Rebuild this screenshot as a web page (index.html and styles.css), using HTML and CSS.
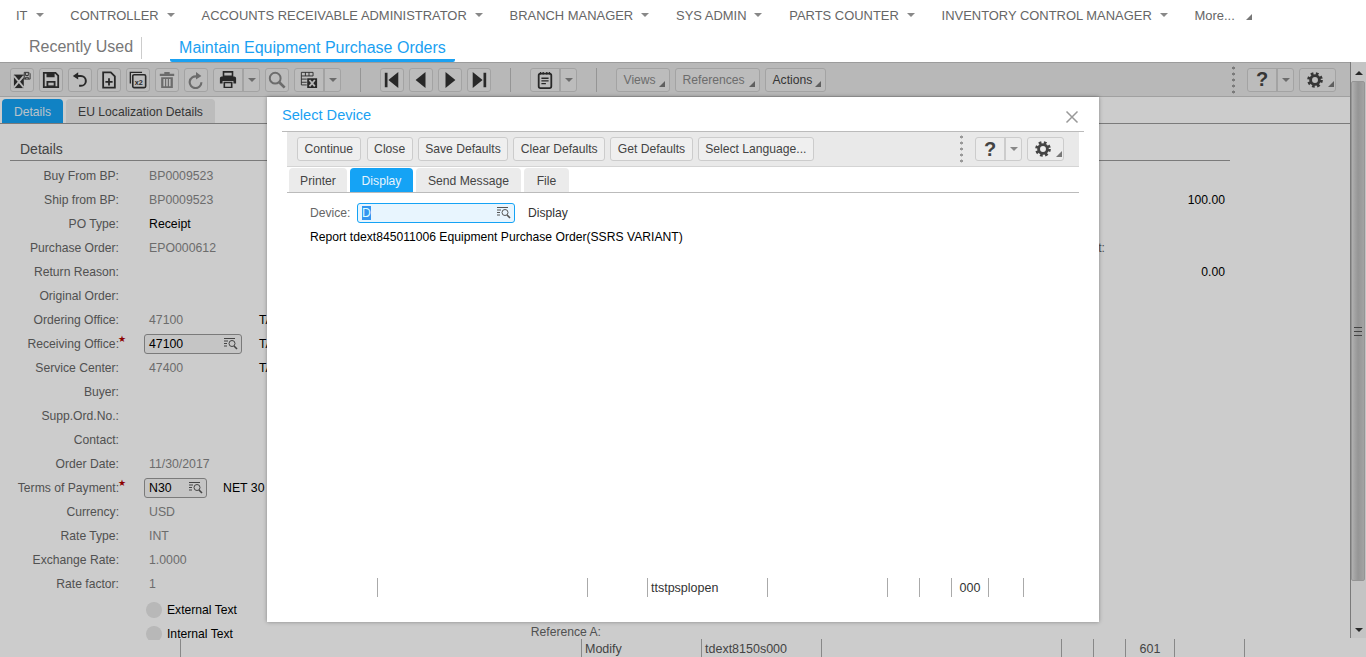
FILE: index.html
```html
<!DOCTYPE html>
<html lang="en">
<head>
  <meta charset="UTF-8">
  <meta name="viewport" content="width=device-width, initial-scale=1.0">
  <title>Maintain Equipment Purchase Orders</title>
  <link rel="stylesheet" href="styles.css">
</head>
<body>
  <!-- icon sprite -->
  <svg class="sprite" xmlns="http://www.w3.org/2000/svg">
    <symbol id="i-saveclose" viewBox="0 0 20 20">
      <path d="M1 4h11v15H1z" fill="currentColor"/>
      <path d="M1 5.500l11 13M12 5.500L1 18.500" stroke="#e6e6e6" stroke-width="2" fill="none"/>
      <path d="M12.500 1.500h5l1.500 1.500v6h-6.500z" fill="#e6e6e6" stroke="currentColor"/>
      <path d="M14 2v3h3V2M14 9V7h3v2" fill="none" stroke="currentColor"/>
    </symbol>
    <symbol id="i-save" viewBox="0 0 20 20">
      <path d="M2 2h13l3 3v13H2z" fill="none" stroke="currentColor" stroke-width="2"/>
      <path d="M5 2h9v5H5zM5 11h10v7H5z" fill="currentColor"/>
      <path d="M7 13h6v3H7z" fill="#e6e6e6"/>
    </symbol>
    <symbol id="i-undo" viewBox="0 0 20 20">
      <path d="M7 5.500h4a5.500 5.500 0 0 1 0 11H9" fill="none" stroke="currentColor" stroke-width="2.200"/>
      <path d="M8 1.500v8l-6-4z" fill="currentColor"/>
    </symbol>
    <symbol id="i-docplus" viewBox="0 0 20 20">
      <path d="M3.500 1.500h8.500l4.500 4.500v12.500h-13z" fill="none" stroke="currentColor" stroke-width="2"/>
      <path d="M9 8h2v3h3v2h-3v3H9v-3H6v-2h3z" fill="currentColor"/>
    </symbol>
    <symbol id="i-copy" viewBox="0 0 20 20">
      <path d="M1.500 14V1.500h13" fill="none" stroke="currentColor" stroke-width="1.500"/>
      <rect x="4.200" y="4.200" width="14.300" height="14.300" rx="1.500" fill="none" stroke="currentColor" stroke-width="1.800"/>
      <text x="6.500" y="15.500" font-family="Liberation Sans, sans-serif" font-size="8" font-weight="700" fill="currentColor">x2</text>
    </symbol>
    <symbol id="i-trash" viewBox="0 0 20 20">
      <path d="M7 1h6v2h5v2.500H2V3h5z" fill="currentColor"/>
      <path d="M3.500 7h13v12h-13zM6 9v8h1.800V9zM9.100 9v8h1.800V9zM12.200 9v8H14V9z" fill="currentColor" fill-rule="evenodd"/>
    </symbol>
    <symbol id="i-refresh" viewBox="0 0 20 20">
      <path d="M15 9.500a6.500 6.500 0 1 1-5-6.300" fill="none" stroke="currentColor" stroke-width="2.400" transform="translate(1 3)"/>
      <path d="M10 1l6 4.500-6 4z" fill="currentColor"/>
    </symbol>
    <symbol id="i-print" viewBox="0 0 20 20">
      <path d="M5 1h10v5H5z" fill="none" stroke="currentColor" stroke-width="1.800"/>
      <path d="M3 6h14a2 2 0 0 1 2 2v6h-3v-3H4v3H1V8a2 2 0 0 1 2-2z" fill="currentColor"/>
      <path d="M5 12h10v7H5z" fill="currentColor"/>
      <path d="M6.800 13.500h6.400V17.500H6.800z" fill="#e6e6e6"/>
    </symbol>
    <symbol id="i-search" viewBox="0 0 20 20">
      <circle cx="8" cy="8" r="6" fill="none" stroke="currentColor" stroke-width="2.200"/>
      <path d="M12.500 12.500l6 6" stroke="currentColor" stroke-width="3"/>
    </symbol>
    <symbol id="i-excel" viewBox="0 0 20 20">
      <path d="M1.500 1.500h13v4h-13zM1.500 5.500v10h6M1.500 9h6M1.500 12.500h6M6 1.500v4M10 1.500v4" fill="none" stroke="currentColor"/>
      <path d="M8 8h11v11H8z" fill="currentColor"/>
      <path d="M10.500 10l6 7M16.500 10l-6 7" stroke="#e6e6e6" stroke-width="2"/>
    </symbol>
    <symbol id="i-first" viewBox="0 0 20 20"><path d="M2 2h3v16H2zM17 1v18L6 10z" fill="currentColor"/></symbol>
    <symbol id="i-prev" viewBox="0 0 20 20"><path d="M15 1v18L4 10z" fill="currentColor"/></symbol>
    <symbol id="i-next" viewBox="0 0 20 20"><path d="M5 1v18l11-9z" fill="currentColor"/></symbol>
    <symbol id="i-last" viewBox="0 0 20 20"><path d="M15 2h3v16h-3zM3 1v18l11-9z" fill="currentColor"/></symbol>
    <symbol id="i-note" viewBox="0 0 20 20">
      <path d="M5 1v3M8 1v3M12 1v3M15 1v3" stroke="currentColor" stroke-width="1.400"/>
      <rect x="3" y="3" width="14" height="16" rx="2" fill="none" stroke="currentColor" stroke-width="2"/>
      <path d="M6 8h8M6 11h8M6 14h5" stroke="currentColor" stroke-width="1.500"/>
    </symbol>
    <symbol id="i-gear" viewBox="0 0 20 20">
      <circle cx="10" cy="10" r="5.500" fill="none" stroke="currentColor" stroke-width="3.600"/>
      <circle cx="10" cy="10" r="8" fill="none" stroke="currentColor" stroke-width="3.600" stroke-dasharray="3.300 3"/>
    </symbol>
    <symbol id="i-lookup" viewBox="0 0 14 14">
      <path d="M0 1.500h11M0 4h4M0 6.500h3M0 9h3" stroke="currentColor"/>
      <circle cx="8" cy="6.500" r="3" fill="none" stroke="currentColor"/>
      <path d="M10 9l3 3" stroke="currentColor" stroke-width="1.600"/>
    </symbol>
  </svg>

  <nav class="menu">
    <a class="menu-item">IT <i class="caret"></i></a>
    <a class="menu-item">CONTROLLER <i class="caret"></i></a>
    <a class="menu-item">ACCOUNTS RECEIVABLE ADMINISTRATOR <i class="caret"></i></a>
    <a class="menu-item">BRANCH MANAGER <i class="caret"></i></a>
    <a class="menu-item">SYS ADMIN <i class="caret"></i></a>
    <a class="menu-item">PARTS COUNTER <i class="caret"></i></a>
    <a class="menu-item">INVENTORY CONTROL MANAGER <i class="caret"></i></a>
    <a class="menu-item menu-more">More... <i class="corner"></i></a>
  </nav>

  <div class="session-tabs">
    <span class="session-recent">Recently Used</span>
    <span class="session-active">Maintain Equipment Purchase Orders</span>
  </div>

  <div class="workspace">
    <div class="work-row">
      <div class="main">
        <div class="toolbar">
          <button class="tb-btn"><svg class="ic"><use href="#i-saveclose"/></svg></button>
          <button class="tb-btn"><svg class="ic"><use href="#i-save"/></svg></button>
          <button class="tb-btn"><svg class="ic"><use href="#i-undo"/></svg></button>
          <button class="tb-btn"><svg class="ic"><use href="#i-docplus"/></svg></button>
          <button class="tb-btn"><svg class="ic"><use href="#i-copy"/></svg></button>
          <button class="tb-btn is-off"><svg class="ic"><use href="#i-trash"/></svg></button>
          <button class="tb-btn is-off"><svg class="ic"><use href="#i-refresh"/></svg></button>
          <div class="split">
            <button class="split-main"><svg class="ic"><use href="#i-print"/></svg></button>
            <button class="split-drop"><i class="caret"></i></button>
          </div>
          <button class="tb-btn is-off"><svg class="ic"><use href="#i-search"/></svg></button>
          <div class="split">
            <button class="split-main"><svg class="ic"><use href="#i-excel"/></svg></button>
            <button class="split-drop"><i class="caret"></i></button>
          </div>
          <span class="tb-sep"></span>
          <button class="tb-btn"><svg class="ic"><use href="#i-first"/></svg></button>
          <button class="tb-btn"><svg class="ic"><use href="#i-prev"/></svg></button>
          <button class="tb-btn"><svg class="ic"><use href="#i-next"/></svg></button>
          <button class="tb-btn"><svg class="ic"><use href="#i-last"/></svg></button>
          <span class="tb-sep"></span>
          <div class="split">
            <button class="split-main"><svg class="ic"><use href="#i-note"/></svg></button>
            <button class="split-drop"><i class="caret"></i></button>
          </div>
          <span class="tb-sep"></span>
          <button class="tb-text is-off views">Views <i class="corner"></i></button>
          <button class="tb-text is-off references">References <i class="corner"></i></button>
          <button class="tb-text actions">Actions <i class="corner"></i></button>
          <span class="tb-grip"></span>
          <div class="split split-help">
            <button class="split-main help">?</button>
            <button class="split-drop"><i class="caret"></i></button>
          </div>
          <button class="tb-gear"><svg class="ic-gear"><use href="#i-gear"/></svg><i class="corner"></i></button>
        </div>

        <div class="page-tabs">
          <span class="tab tab-on details-tab">Details</span>
          <span class="tab eu-tab">EU Localization Details</span>
        </div>

        <div class="section-title">Details</div>

        <div class="form">
          <div class="form-left">
            <div class="row"><label>Buy From BP:</label><span class="val off">BP0009523</span></div>
            <div class="row"><label>Ship from BP:</label><span class="val off">BP0009523</span></div>
            <div class="row"><label>PO Type:</label><span class="val">Receipt</span></div>
            <div class="row"><label>Purchase Order:</label><span class="val off">EPO000612</span></div>
            <div class="row"><label>Return Reason:</label><span class="val"></span></div>
            <div class="row"><label>Original Order:</label><span class="val"></span></div>
            <div class="row"><label>Ordering Office:</label><span class="val off">47100</span><span class="extra">TA</span></div>
            <div class="row">
              <label class="req">Receiving Office:<b class="star">★</b></label>
              <span class="val val-input"><span class="lookup lookup-office">47100<svg class="ic-look"><use href="#i-lookup"/></svg></span></span>
              <span class="extra">TA</span>
            </div>
            <div class="row"><label>Service Center:</label><span class="val off">47400</span><span class="extra">TA</span></div>
            <div class="row"><label>Buyer:</label><span class="val"></span></div>
            <div class="row"><label>Supp.Ord.No.:</label><span class="val"></span></div>
            <div class="row"><label>Contact:</label><span class="val"></span></div>
            <div class="row"><label>Order Date:</label><span class="val off">11/30/2017</span></div>
            <div class="row">
              <label class="req">Terms of Payment:<b class="star">★</b></label>
              <span class="val val-input"><span class="lookup lookup-terms">N30<svg class="ic-look"><use href="#i-lookup"/></svg></span><span class="terms-desc">NET 30</span></span>
            </div>
            <div class="row"><label>Currency:</label><span class="val off">USD</span></div>
            <div class="row"><label>Rate Type:</label><span class="val off">INT</span></div>
            <div class="row"><label>Exchange Rate:</label><span class="val off">1.0000</span></div>
            <div class="row"><label>Rate factor:</label><span class="val off">1</span></div>
            <div class="radio-row"><i class="radio"></i>External Text</div>
            <div class="radio-row"><i class="radio radio-cut"></i>Internal Text</div>
          </div>
          <div class="form-right">
            <div class="side-row"></div>
            <div class="side-row"><span></span><span></span><span class="amt">100.00</span></div>
            <div class="side-row"></div>
            <div class="side-row"><span></span><span class="side-label">t:</span></div>
            <div class="side-row"><span></span><span></span><span class="amt">0.00</span></div>
            <div class="side-gap"></div>
            <div class="side-row"><span class="side-label">Reference A:</span></div>
          </div>
        </div>
      </div>

      <div class="scrollbar">
        <span class="sb-up"></span>
        <div class="sb-thumb"><i class="sb-grip"></i></div>
        <span class="sb-down"></span>
      </div>
    </div>

    <div class="status status-main">
      <span class="cell w401"></span>
      <span class="cell w120">Modify</span>
      <span class="cell w120">tdext8150s000</span>
      <span class="cell w240"></span>
      <span class="cell w32"></span>
      <span class="cell w32"></span>
      <span class="cell w49 mid">601</span>
      <span class="cell w71 cell-end"></span>
    </div>

    <div class="mask"></div>

    <div class="modal">
      <div class="modal-head">
        <h2>Select Device</h2>
        <svg class="modal-close" viewBox="0 0 14 14"><path d="M1.500 1.500l11 11M12.500 1.500l-11 11" stroke="currentColor" stroke-width="1.500"/></svg>
      </div>
      <div class="modal-tools">
        <button class="tb-text tb-first">Continue</button>
        <button class="tb-text">Close</button>
        <button class="tb-text">Save Defaults</button>
        <button class="tb-text">Clear Defaults</button>
        <button class="tb-text">Get Defaults</button>
        <button class="tb-text">Select Language...</button>
        <span class="tb-grip"></span>
        <div class="split split-help">
          <button class="split-main help">?</button>
          <button class="split-drop"><i class="caret"></i></button>
        </div>
        <button class="tb-gear"><svg class="ic-gear"><use href="#i-gear"/></svg><i class="corner"></i></button>
      </div>
      <div class="modal-tabs">
        <span class="tab printer-tab">Printer</span>
        <span class="tab tab-on display-tab">Display</span>
        <span class="tab message-tab">Send Message</span>
        <span class="tab file-tab">File</span>
      </div>
      <div class="modal-body">
        <div class="device-row">
          <label>Device:</label>
          <span class="device-input"><span class="selected">D</span><svg class="ic-look"><use href="#i-lookup"/></svg></span>
          <span class="device-desc">Display</span>
        </div>
        <p class="report-line">Report tdext845011006 Equipment Purchase Order(SSRS VARIANT)</p>
      </div>
      <div class="status status-modal">
        <span class="cell w210"></span>
        <span class="cell w60"></span>
        <span class="cell w120">ttstpsplopen</span>
        <span class="cell w120"></span>
        <span class="cell w32"></span>
        <span class="cell w32"></span>
        <span class="cell w37 mid">000</span>
        <span class="cell w36 cell-end"></span>
      </div>
    </div>
  </div>
</body>
</html>
```

FILE: styles.css
```css
html, body {
  margin: 0;
  height: 657px;
  overflow: hidden;
}
body {
  font-family: "Liberation Sans", Arial, sans-serif;
  font-size: 12.15px;
  color: #555;
  background-color: #fff;
}
button {
  font-family: inherit;
  font-size: 12.15px;
  color: #444;
  padding: 0;
  margin: 0;
}
.sprite {
  display: none;
}

/* top menu */
.menu {
  height: 32px;
  box-sizing: border-box;
  padding: 0 0 2px 16px;
  display: flex;
  align-items: center;
  gap: 26.8px;
  white-space: nowrap;
}
.menu-item {
  font-size: 12.95px;
  color: #666;
  display: flex;
  align-items: center;
  gap: 8px;
  height: 30px;
}
.caret {
  display: inline-block;
  width: 0;
  height: 0;
  border-left: 4px solid transparent;
  border-right: 4px solid transparent;
  border-top: 4px solid #888;
}
.corner {
  display: inline-block;
  width: 0;
  height: 0;
  border-left: 6px solid transparent;
  border-bottom: 6px solid #777;
}
.menu-more .corner {
  margin-left: 3px;
  margin-top: 3px;
}

/* second row */
.session-tabs {
  height: 30px;
  display: flex;
  align-items: flex-end;
  font-size: 16px;
}
.session-recent {
  margin-left: 29px;
  margin-bottom: 3px;
  padding-right: 8px;
  height: 22px;
  line-height: 20px;
  border-right: 1px solid #ccc;
  color: #777;
}
.session-active {
  margin-left: 28px;
  padding: 0 9px;
  height: 28px;
  line-height: 27px;
  color: #1aa1f2;
  border-bottom: 3px solid #1aa1f2;
  border-radius: 0 0 2px 2px;
  box-sizing: border-box;
}

/* work area, colours get dimmed by .mask */
.workspace {
  position: relative;
  height: 595px;
  display: flex;
  flex-direction: column;
  overflow: hidden;
  background-color: #fff;
}
.work-row {
  display: flex;
  height: 578px;
  flex: none;
}
.main {
  flex: 1;
  min-width: 0;
  overflow: hidden;
}
.mask {
  position: absolute;
  inset: 0;
  background-color: rgba(0, 0, 0, 0.2);
}

.toolbar {
  height: 35px;
  box-sizing: border-box;
  background-color: #e6e6e6;
  border-top: 1px solid #c4c4c4;
  border-bottom: 1px solid #c8c8c8;
  display: flex;
  align-items: center;
  padding-left: 10px;
  gap: 5px;
}
.tb-btn, .split, .tb-text, .tb-gear {
  height: 24px;
  box-sizing: border-box;
  background-color: #ececec;
  border: 1px solid #ccc;
  border-radius: 3px;
}
.tb-btn {
  width: 24px;
  display: flex;
  align-items: center;
  justify-content: center;
  color: #333;
}
.is-off {
  color: #888;
}
.ic {
  width: 18px;
  height: 18px;
  display: block;
}
.ic-gear {
  width: 16px;
  height: 16px;
  display: block;
  flex: none;
}
.split {
  display: flex;
  width: 47px;
  overflow: hidden;
}
.split-main {
  width: 30px;
  border: none;
  border-right: 2px solid #ccc;
  background: none;
  display: flex;
  align-items: center;
  justify-content: center;
  color: #333;
}
.split-drop {
  flex: 1;
  border: none;
  background: none;
  display: flex;
  align-items: center;
  justify-content: center;
}
.tb-sep {
  width: 1px;
  height: 24px;
  background-color: #bbb;
  margin: 0 14px;
}
.tb-text {
  padding: 0 6.5px;
  color: #444;
  white-space: nowrap;
}
.tb-text.is-off {
  color: #888;
}
.views, .references, .actions {
  display: flex;
  align-items: center;
  justify-content: space-between;
}
.views .corner, .references .corner, .actions .corner {
  margin-top: 9px;
  margin-right: -2px;
}
.views { width: 54px; }
.references { width: 85px; }
.actions { width: 61px; }
.tb-grip {
  margin-left: auto;
  margin-right: 7px;
  width: 3px;
  height: 30px;
  background-image: radial-gradient(circle, #999 1.4px, transparent 1.6px);
  background-size: 3px 6px;
}
.help {
  font-size: 20px;
  font-weight: bold;
  color: #444;
}
.tb-gear {
  width: 37px;
  display: flex;
  align-items: center;
  padding-left: 7px;
  color: #444;
  margin-right: 14px;
}
.tb-gear .corner {
  margin-top: 9px;
  margin-left: 5px;
}

/* tabs */
.page-tabs {
  height: 27px;
  box-sizing: border-box;
  display: flex;
  align-items: flex-end;
  gap: 3px;
  padding-left: 2px;
  border-bottom: 1px solid #999;
}
.tab {
  height: 24px;
  line-height: 27px;
  text-align: center;
  background-color: #ebebeb;
  color: #444;
  border-radius: 4px 4px 0 0;
}
.tab-on {
  background-color: #15a3f5;
  color: #e6f4fd;
}
.details-tab { width: 61px; }
.eu-tab { width: 149px; }

.section-title {
  margin: 13px 0 0 10px;
  width: 1210px;
  padding-left: 10px;
  height: 23px;
  line-height: 24px;
  font-size: 14px;
  color: #555;
  border-bottom: 1px solid #999;
}

/* form */
.form {
  display: flex;
  padding-top: 3px;
}
.form-left {
  width: 267px;
  flex: none;
}
.form-right {
  width: 958px;
  flex: none;
}
.row {
  display: grid;
  grid-template-columns: 119px 140px 8px;
  height: 24px;
  line-height: 24px;
  white-space: nowrap;
}
.row label {
  text-align: right;
  color: #666;
}
.req {
  position: relative;
}
.star {
  position: absolute;
  right: -7px;
  top: -5px;
  font-family: "DejaVu Sans", sans-serif;
  font-size: 9px;
  font-weight: normal;
  color: #b00000;
}
.val {
  padding-left: 30px;
  color: #000;
  font-size: 12.3px;
}
.val.off {
  color: #888;
}
.val-input {
  padding-left: 25px;
  display: flex;
  align-items: center;
  color: #000;
}
.lookup {
  flex: none;
  height: 20px;
  box-sizing: border-box;
  border: 1px solid #999;
  border-radius: 3px;
  background-color: #f7f7f7;
  line-height: 18px;
  padding-left: 4px;
  display: flex;
  align-items: center;
  justify-content: space-between;
  padding-right: 3px;
  color: #000;
}
.lookup-office { width: 98px; }
.lookup-terms { width: 63px; }
.terms-desc {
  margin-left: 16px;
}
.ic-look {
  width: 14px;
  height: 14px;
  color: #555;
  flex: none;
}
.extra {
  color: #000;
}
.radio-row {
  display: flex;
  align-items: center;
  gap: 5px;
  height: 24px;
  line-height: 12px;
  padding-left: 146px;
  color: #000;
  position: relative;
  top: 2px;
}
.radio {
  width: 16px;
  height: 16px;
  border-radius: 50%;
  background-color: #e6e6e6;
}
.radio-cut {
  clip-path: inset(0 0 2px 0);
}
.side-row {
  display: grid;
  grid-template-columns: 334px 504px 120px;
  height: 24px;
  line-height: 24px;
}
.side-gap {
  height: 336px;
}
.side-label {
  text-align: right;
  color: #666;
}
.amt {
  text-align: right;
  color: #000;
}

/* scrollbar */
.scrollbar {
  width: 16px;
  flex: none;
  box-sizing: border-box;
  margin-bottom: 2px;
  border-left: 1px solid #999;
  background-color: #f5f5f5;
  position: relative;
}
.sb-up, .sb-down {
  position: absolute;
  left: 4px;
  width: 0;
  height: 0;
  border-left: 4px solid transparent;
  border-right: 4px solid transparent;
}
.sb-up {
  top: 9px;
  border-bottom: 4px solid #333;
}
.sb-down {
  bottom: 6px;
  border-top: 4px solid #333;
}
.sb-thumb {
  position: absolute;
  top: 19px;
  left: 0;
  right: 1px;
  height: 500px;
  box-sizing: border-box;
  border: 1px solid #bbb;
  border-radius: 2px;
  background: linear-gradient(to right, #ddd, #bbb 50%, #ccc);
  display: flex;
  align-items: center;
  justify-content: center;
}
.sb-grip {
  width: 8px;
  height: 7px;
  border-top: 1px solid #555;
  border-bottom: 1px solid #555;
  background: linear-gradient(#555, #555) center / 8px 1px no-repeat;
}

/* status bars */
.status {
  display: flex;
  line-height: 20px;
  font-size: 12.5px;
  color: #333;
}
.status-main {
  height: 18px;
  margin-top: -1px;
  padding-left: 180px;
  color: #555;
}
.status-modal {
  height: 19px;
  margin-left: 110px;
  margin-top: auto;
  margin-bottom: 25px;
}
.cell {
  box-sizing: border-box;
  border-left: 1px solid #aaa;
  padding-left: 3px;
  white-space: nowrap;
}
.cell-end {
  border-right: 1px solid #aaa;
}
.mid {
  text-align: center;
  padding-left: 0;
}
.w401 { width: 401px; }
.w240 { width: 240px; }
.w210 { width: 210px; }
.w120 { width: 120px; }
.w71 { width: 71px; }
.w60 { width: 60px; }
.w49 { width: 49px; }
.w37 { width: 37px; }
.w36 { width: 36px; }
.w32 { width: 32px; }

/* modal dialog */
.modal {
  position: absolute;
  left: 267px;
  top: 35px;
  width: 832px;
  height: 525px;
  background-color: #fff;
  box-shadow: 0 0 4px rgba(0, 0, 0, 0.35);
  display: flex;
  flex-direction: column;
}
.modal-head {
  margin: 0 15px;
  height: 35px;
  flex: none;
  box-sizing: border-box;
  border-bottom: 1px solid #bbb;
  display: flex;
  align-items: center;
  justify-content: space-between;
}
.modal-head h2 {
  margin: 2px 0 0 0;
  font-size: 14.6px;
  font-weight: normal;
  color: #1aa1f2;
}
.modal-close {
  width: 14px;
  height: 14px;
  color: #999;
  margin: 6px 5px 0 0;
}
.modal-tools {
  margin: 0 20px;
  height: 35px;
  flex: none;
  box-sizing: border-box;
  background-color: #e9e9e9;
  border-bottom: 1px solid #d4d4d4;
  display: flex;
  align-items: center;
  gap: 5px;
  padding-left: 10px;
}
.modal-tools .tb-text {
  background-color: #efefef;
}
.modal-tools .tb-first {
  margin-right: 1px;
}
.modal-tools .tb-gear {
  margin-right: 15px;
}
.modal-tabs {
  margin: 0 20px;
  height: 26px;
  flex: none;
  box-sizing: border-box;
  border-bottom: 1px solid #bbb;
  display: flex;
  align-items: flex-end;
  gap: 3px;
  padding-left: 2px;
}
.printer-tab { width: 58px; }
.display-tab { width: 63px; }
.message-tab { width: 105px; }
.file-tab { width: 45px; }
.modal-body {
  padding: 10px 0 0 43px;
  color: #000;
}
.device-row {
  display: flex;
  align-items: center;
  height: 20px;
}
.device-row label {
  width: 39px;
  text-align: right;
  color: #666;
}
.device-input {
  margin-left: 8px;
  width: 158px;
  height: 20px;
  box-sizing: border-box;
  border: 1px solid #15a3f5;
  border-radius: 3px;
  background-color: #e8f5fe;
  display: flex;
  align-items: center;
  justify-content: space-between;
  padding: 0 3px 0 4px;
}
.selected {
  background-color: #3296f0;
  color: #dff;
  line-height: 14px;
}
.device-desc {
  margin-left: 13px;
  color: #333;
}
.report-line {
  margin: 7px 0 0 0;
  line-height: 14px;
}
```
